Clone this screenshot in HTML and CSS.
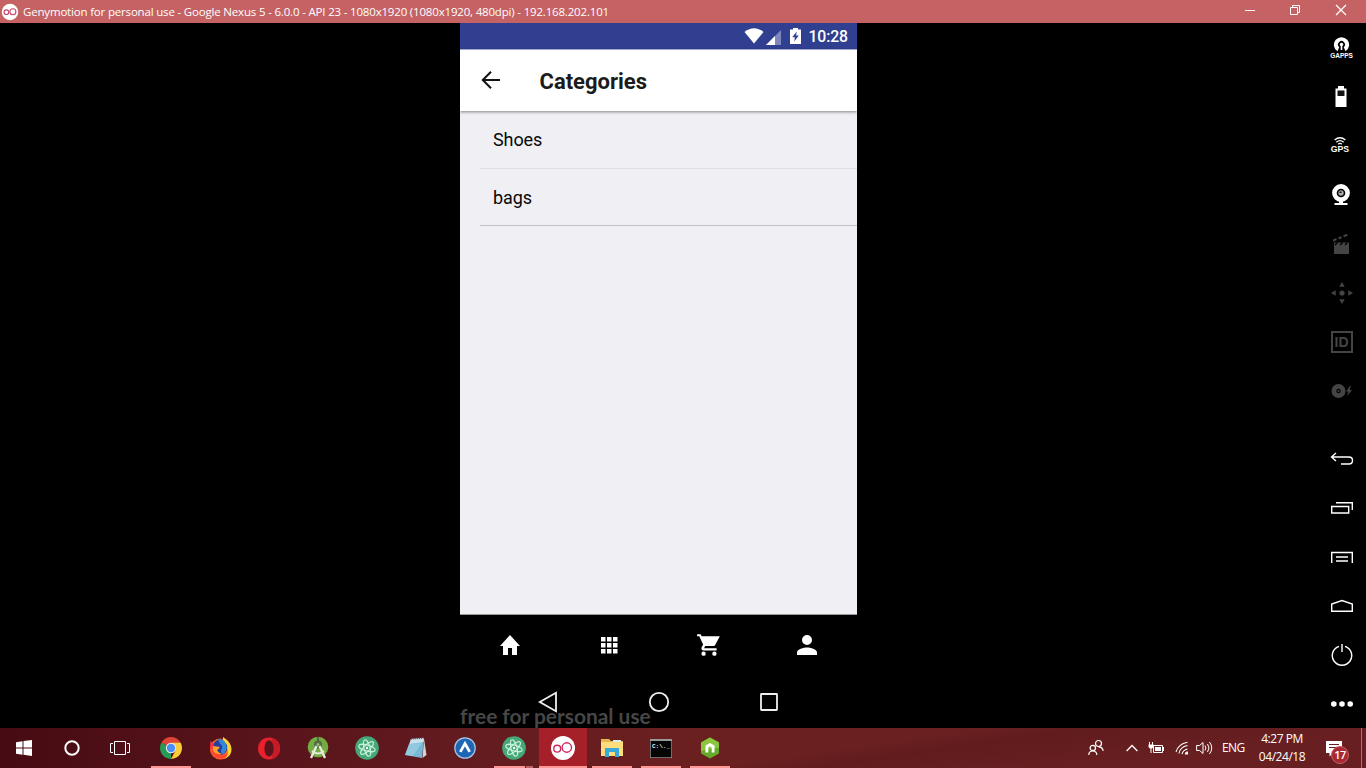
FILE: index.html
```html
<!DOCTYPE html>
<html lang="en">
<head>
<meta charset="utf-8">
<title>Genymotion for personal use</title>
<link rel="stylesheet" href="styles.css">
</head>
<body>
<div class="desktop">
  <header class="titlebar">
    <svg class="title-logo" width="18" height="18" viewBox="0 0 18 18"><circle cx="9" cy="9" r="8.2" fill="#fff"/><g fill="none" stroke="#c4486c" stroke-width="1.1"><circle cx="5.4" cy="9.2" r="2.3"/><circle cx="11.9" cy="8.8" r="3"/></g></svg>
    <span class="title-text">Genymotion for personal use - Google Nexus 5 - 6.0.0 - API 23 - 1080x1920 (1080x1920, 480dpi) - 192.168.202.101</span>
    <div class="window-buttons">
      <svg width="46" height="23" viewBox="0 0 46 23"><path d="M18 10.5h10" stroke="#fff"/></svg>
      <svg width="45" height="23" viewBox="0 0 45 23" fill="none" stroke="#fff"><path d="M17.5 7.5h7v7h-7zM19.500 7.500v-2h7v7h-2"/></svg>
      <svg width="48" height="23" viewBox="0 0 48 23"><path d="M18 5l10 10M28 5L18 15" stroke="#fff" stroke-width="1.3"/></svg>
    </div>
  </header>

  <main class="emulator">
    <section class="phone">
      <div class="statusbar">
        <svg class="wifi" width="20" height="16" viewBox="0 0 20 16"><path d="M.5 4Q10-3.500 19.500 4L10 15.500z" fill="#fff"/></svg>
        <svg class="signal" width="15" height="15" viewBox="0 0 15 15"><path d="M15 0v15H0z" fill="#7d87bd"/><path d="M9 6v9H0z" fill="#fff"/></svg>
        <svg class="battery" width="11" height="16" viewBox="0 0 11 16"><path d="M3 0h5v1.500h3V16H0V1.500h3z" fill="#fff"/><path d="M6.700 3.500L2.200 9.200h2.700l-.7 4.300 4.600-5.900H6.100z" fill="#303f8f"/></svg>
        <span class="phone-time">10:28</span>
      </div>
      <div class="appbar">
        <svg class="back" width="20" height="20" viewBox="0 0 20 20"><path d="M19 10H2M10 1.800L1.800 10l8.200 8.200" fill="none" stroke="#111" stroke-width="2"/></svg>
        <h1 class="app-title">Categories</h1>
      </div>
      <div class="list">
        <div class="row">Shoes</div>
        <div class="row row-last">bags</div>
      </div>
      <nav class="tabs">
        <svg width="24" height="24" viewBox="0 0 24 24"><path d="M10 22v-7h4v7h5v-9h3L12 2 2 13h3v9z"/></svg>
        <svg width="24" height="24" viewBox="0 0 24 24"><path d="M4 4h4.500v4.500H4zm6 0h4.500v4.500H10zm6 0h4.500v4.500H16zM4 10h4.500v4.500H4zm6 0h4.500v4.500H10zm6 0h4.500v4.500H16zM4 16h4.500v4.500H4zm6 0h4.500v4.500H10zm6 0h4.500v4.500H16z"/></svg>
        <svg class="cart" width="26" height="26" viewBox="0 0 24 24"><path d="M7 18a2 2 0 1 0 0 4 2 2 0 0 0 0-4zM1 2v2h2l3.600 7.600-1.400 2.400C4.500 15.400 5.500 17 7 17h12v-2H7.400l1.100-2h7.500c.7 0 1.400-.4 1.700-1L22 4H5.200l-.9-2zM17 18a2 2 0 1 0 0 4 2 2 0 0 0 0-4z"/></svg>
        <svg width="30" height="30" viewBox="0 0 24 24"><path d="M12 12a4 4 0 1 0 0-8 4 4 0 0 0 0 8zm0 2c-2.700 0-8 1.300-8 4v2h16v-2c0-2.700-5.300-4-8-4z"/></svg>
      </nav>
      <div class="android-nav">
        <svg width="22" height="22" viewBox="0 0 22 22"><path d="M19 1.800v18.400L2.800 11z"/></svg>
        <svg width="22" height="22" viewBox="0 0 22 22"><circle cx="11" cy="11" r="9.200"/></svg>
        <svg width="22" height="22" viewBox="0 0 22 22"><rect x="3" y="3" width="16" height="16" rx=".5"/></svg>
      </div>
      <div class="watermark">free for personal use</div>
    </section>

    <aside class="tools">
      <div class="tool tool-gapps">
        <svg width="17" height="15" viewBox="0 0 17 15"><path d="M4.500 14.200A7.600 7.600 0 1 1 12.500 14.200L10.800 10.200A3.500 3.500 0 1 0 6.200 10.200z" fill="#fff"/><circle cx="8.500" cy="7.500" r="1.700" fill="#fff"/><path d="M7.700 8h1.600v5H7.700z" fill="#fff"/></svg>
        <span class="gapps-label">GAPPS</span>
      </div>
      <div class="tool solid-tool"><svg width="12" height="21" viewBox="0 0 12 21"><path d="M3 0h6v2.500h2.500V21H.5V2.500H3z" fill="#fff"/><path d="M2.500 4.500h7V10h-7z" fill="#111"/></svg></div>
      <div class="tool tool-gps">
        <svg width="12" height="8" viewBox="0 0 12 8" fill="none" stroke="#fff" stroke-width="1.300"><path d="M.6 3Q6-1.500 11.400 3M2.300 5.200Q6 2 9.700 5.200M4.200 7.200Q6 5.600 7.800 7.200"/></svg>
        <span class="gps-label">GPS</span>
      </div>
      <div class="tool solid-tool"><svg width="20" height="22" viewBox="0 0 20 22"><circle cx="10" cy="9" r="6.600" fill="none" stroke="#fff" stroke-width="4.600"/><circle cx="10" cy="9" r="2.700" fill="#aaa"/><path d="M8.500 7.500h2V9h-2z" fill="#111"/><path d="M8 16h4v3h4.500v2h-13v-2H8z" fill="#fff"/></svg></div>
      <div class="tool solid-tool"><svg width="18" height="22" viewBox="0 0 18 22" fill="#444"><path d="M2 9.500h15V21H2z"/><path d="M1 6.500l3-1.200 1 1.800-4 1.700zM6 4.500l3-1.200 1 1.800-3 1.300zM11 2.500l4-1.700.5 2-3.500 1.500z"/><path d="M3 12l2.500-2.500M8 12l2.500-2.500M13 12l2.500-2.500" stroke="#000" stroke-width="1.300"/></svg></div>
      <div class="tool"><svg width="22" height="22" viewBox="0 0 22 22" fill="#444"><circle cx="11" cy="11" r="2.600"/><path d="M11 0l2.700 4.700H8.300zM11 22l2.700-4.700H8.300zM0 11l4.700-2.700v5.400zM22 11l-4.700-2.700v5.400z"/></svg></div>
      <div class="tool"><span class="id-box">ID</span></div>
      <div class="tool"><svg width="22" height="16" viewBox="0 0 22 16"><circle cx="7.500" cy="8" r="4.600" fill="none" stroke="#444" stroke-width="4.800"/><circle cx="7.500" cy="8" r="1" fill="#444"/><path d="M19 3l-4 5.500h2.500L16 13l5-6h-2.500L20 3z" fill="#444"/></svg></div>
      <div class="tool-gap"></div>
      <div class="tool line-tool"><svg width="24" height="14" viewBox="0 0 24 14"><path d="M6 1L1.500 5 6 9M1.500 5H19q3.500 0 3.500 3.500T19 12h-8"/></svg></div>
      <div class="tool line-tool"><svg width="22" height="14" viewBox="0 0 22 14"><path d="M.7 5.500h17v6.500H.7zM5 1.700h16.300V9"/></svg></div>
      <div class="tool line-tool"><svg width="22" height="14" viewBox="0 0 22 14"><path d="M.7 13V2.500h20.600V13M5 7h12M5 11h12"/></svg></div>
      <div class="tool line-tool"><svg width="22" height="14" viewBox="0 0 22 14"><path d="M.7 12.300V5L11 1.500 21.300 5v7.300z"/></svg></div>
      <div class="tool line-tool"><svg width="22" height="24" viewBox="0 0 22 24"><path d="M8 3.300a9.700 9.700 0 1 0 6 0M11 1v8"/></svg></div>
      <div class="tool"><svg width="22" height="6" viewBox="0 0 22 6" fill="#fff"><circle cx="2.800" cy="3" r="2.800"/><circle cx="11" cy="3" r="2.800"/><circle cx="19.200" cy="3" r="2.800"/></svg></div>
    </aside>
  </main>

  <footer class="taskbar">
    <div class="system-buttons">
      <div class="sys"><svg width="16" height="16" viewBox="0 0 16 16" fill="#fff"><path d="M0 2.300L6.500 1.300v6.200H0zM7.500 1.100L16 0v7.500H7.500zM0 8.500h6.500v6.200L0 13.700zM7.500 8.500H16V16l-8.500-1.200z"/></svg></div>
      <div class="sys"><svg width="16" height="16" viewBox="0 0 16 16"><circle cx="8" cy="8" r="6.700" fill="none" stroke="#fff" stroke-width="2"/></svg></div>
      <div class="sys"><svg width="20" height="16" viewBox="0 0 20 16" fill="none" stroke="#fff"><path d="M4.500 1.500h11v13h-11zM3 3.500H.5v9H3M17 3.500h2.500v9H17"/></svg></div>
    </div>
    <div class="apps">
      <div class="app running"><svg width="22" height="22" viewBox="0 0 22 22"><path d="M11 11L1.500 5.500A11 11 0 0 1 20.500 5.500z" fill="#df4436"/><path d="M11 11L1.500 5.500A11 11 0 0 0 11 22z" fill="#279c57"/><path d="M11 5.800h9.700A11 11 0 0 1 11 22l4.500-8.500z" fill="#fbcc3a"/><circle cx="11" cy="11" r="5.200" fill="#eee"/><circle cx="11" cy="11" r="4.200" fill="#4c8ef7"/></svg></div>
      <div class="app"><svg width="23" height="23" viewBox="0 0 23 23"><circle cx="11.500" cy="12" r="10.500" fill="#ff6a20"/><path d="M1 12L1.500 4l3 2.500L8 4l-1 4-4 7z" fill="#ff3048"/><path d="M14 0q8 5 8.500 12T15 22.200q5-4 3.500-10T14 4z" fill="#ffd334"/><path d="M5 6q3-4 8-4l5 6q1 5-2 8t-7 2-5-7z" fill="#263f9e"/><path d="M9 2.500q5-1 8 4 2 6-2 10-3 1-3-3 3-4-1-7z" fill="#3389d7"/><path d="M1 12q1 9 10.500 10.300Q18 21 19 16q-4 3-8 1T4 9z" fill="#ff4a30"/><path d="M4 9l7 1-3 3.500q2 3 5 3-6 2-9-3z" fill="#ffa22c"/></svg></div>
      <div class="app"><svg width="24" height="23" viewBox="0 0 24 23"><ellipse cx="12" cy="11.500" rx="11" ry="11" fill="#e9212d"/><path d="M15 1q8 2 8 10.500T15 22z" fill="#c91a27"/><ellipse cx="12" cy="11.500" rx="4.600" ry="8.300" fill="#59151b"/></svg></div>
      <div class="app"><svg width="22" height="24" viewBox="0 0 22 24"><circle cx="11" cy="11" r="10.300" fill="#75ac42"/><circle cx="11" cy="8.500" r="4" fill="#536a43"/><path d="M10 1h2v4h-2z" fill="#526347"/><path d="M9.500 10L4 22M12.500 10L18 22" stroke="#e5ebdf" stroke-width="2.300"/><path d="M5 15q6 5 12 0" fill="none" stroke="#e5ebdf" stroke-width="1.800"/><circle cx="11" cy="8.500" r="1.500" fill="#9cb678"/></svg></div>
      <div class="app"><svg width="24" height="24" viewBox="0 0 24 24"><circle cx="12" cy="12" r="11.800" fill="#45a879"/><g fill="none" stroke="#c8f0da" stroke-width="1.100"><ellipse cx="12" cy="12" rx="3" ry="8.500" transform="rotate(-15 12 12)"/><ellipse cx="12" cy="12" rx="3" ry="8.500" transform="rotate(45 12 12)"/><ellipse cx="12" cy="12" rx="3" ry="8.500" transform="rotate(105 12 12)"/></g><circle cx="12" cy="12" r="1.200" fill="#fff"/></svg></div>
      <div class="app"><svg width="24" height="23" viewBox="0 0 24 23"><path d="M20 2l2.500 16-4 3z" fill="#d5d4cd"/><path d="M7 2l13-1-2 20L1 18z" fill="#78b8d4"/><path d="M7 2l13-1-.3 4L5.500 7z" fill="#cce2e9"/><path d="M5 7l13-1-9 13-8-1z" fill="#a3d3e4" opacity=".6"/><path d="M7 2l13-1" stroke="#666" stroke-width="1.500" stroke-dasharray="1 1"/></svg></div>
      <div class="app"><svg width="22" height="22" viewBox="0 0 22 22"><circle cx="11" cy="11" r="10.200" fill="#1e66b4" stroke="#a9c7e6" stroke-width="1.200"/><path d="M6.300 14.800L11 6.500l4.700 8.300" fill="none" stroke="#fff" stroke-width="2.700"/></svg></div>
      <div class="app running grouped"><svg width="24" height="24" viewBox="0 0 24 24"><circle cx="12" cy="12" r="11.800" fill="#45a879"/><g fill="none" stroke="#c8f0da" stroke-width="1.100"><ellipse cx="12" cy="12" rx="3" ry="8.500" transform="rotate(-15 12 12)"/><ellipse cx="12" cy="12" rx="3" ry="8.500" transform="rotate(45 12 12)"/><ellipse cx="12" cy="12" rx="3" ry="8.500" transform="rotate(105 12 12)"/></g><circle cx="12" cy="12" r="1.200" fill="#fff"/></svg></div>
      <div class="app active"><svg width="24" height="24" viewBox="0 0 24 24"><circle cx="12" cy="12" r="12" fill="#fff"/><g fill="none" stroke="#cf285e" stroke-width="1.400"><circle cx="6.200" cy="12.700" r="3.400"/><circle cx="15.800" cy="11.500" r="4.700"/></g></svg></div>
      <div class="app running"><svg width="22" height="20" viewBox="0 0 22 20"><path d="M0 1h8l2 2h12v15H0z" fill="#e9b84e"/><path d="M0 4h22v14H0z" fill="#ffdd7c"/><path d="M12 2h8v2h-8z" fill="#d7eeee"/><path d="M4 10h14v9h-4v-5H8v5H4z" fill="#39a9d7"/></svg></div>
      <div class="app running"><svg class="console" width="22" height="19" viewBox="0 0 22 19"><path fill="#999" d="M0 0h22v19H0z"/><path fill="#050505" d="M.7 2h20.600v16.300H.7z"/><text x="2" y="8.500" fill="#eee" font-size="6" font-weight="bold">C:\._</text></svg></div>
      <div class="app running"><svg width="20" height="22" viewBox="0 0 20 22"><path d="M10 .5l9 5v11l-9 5-9-5v-11z" fill="#66aa2b"/><path d="M10 .5l9 5v5L1 14V5.500z" fill="#8bc63e"/><path d="M5.500 15.500V8.500L10 6l4.500 2.500v7h-2.800v-5L10 9.500l-1.700 1v5z" fill="#fff"/></svg></div>
    </div>
    <div class="tray">
      <svg class="people" width="16" height="18" viewBox="0 0 16 18" fill="none" stroke="#fff" stroke-width="1.200"><circle cx="10.500" cy="4.500" r="3"/><circle cx="4.800" cy="9" r="2.700"/><path d="M.8 16q0-4 4-4t4 4M10.500 7.800q4 0 4.700 4"/></svg>
      <svg class="chevron" width="12" height="8" viewBox="0 0 12 8"><path d="M.6 7L6 1.500 11.400 7" fill="none" stroke="#fff" stroke-width="1.300"/></svg>
      <svg class="power" width="17" height="12" viewBox="0 0 17 12"><path d="M5.500 3.500h9v7h-9z" fill="none" stroke="#fff"/><path d="M7 5h6v4H7zM15 5h1v4h-1zM.5 2.500h5V5L4 6.500H2L.5 5zM1 0h1v3H1zM4 0h1v3H4zM2.500 6h1v5h-1z" fill="#fff"/></svg>
      <svg class="net" width="14" height="14" viewBox="0 0 14 14" fill="none" stroke="#fff" stroke-width="1.100"><path d="M1 11Q3 3 12.500 1.200M4 12.500Q5 6 12.500 4.500M7 13Q8 9 12.500 8"/><path d="M10.500 13q0-2 2-2v2z" fill="#fff"/></svg>
      <svg class="sound" width="17" height="14" viewBox="0 0 17 14" fill="none" stroke="#fff"><path d="M.6 4.500h3L7 1.500v11l-3.400-3h-3zM9 4.500q1.800 2.500 0 5M11.500 3q3 4 0 8M13.500 1q4.500 6 0 12"/></svg>
      <span class="lang">ENG</span>
      <div class="clock"><span class="hour">4:27 PM</span><span class="date">04/24/18</span></div>
      <div class="notify">
        <svg width="18" height="17" viewBox="0 0 18 17"><path d="M1 1h16v12H8l-3.500 3.500V13H1z" fill="#fff"/><path d="M4 4.500h10M4 7.500h10" stroke="#681f21"/></svg>
        <span class="badge">17</span>
      </div>
      <div class="show-desktop"></div>
    </div>
  </footer>
</div>
</body>
</html>
```
FILE: styles.css
```css
* { box-sizing: border-box; }
body { margin: 0; background: #000; font-family: "Open Sans", sans-serif; }
svg { display: block; flex: none; }
.desktop { width: 1366px; height: 768px; display: flex; flex-direction: column; overflow: hidden; }

.titlebar { height: 23px; flex: none; display: flex; align-items: center; background: #c46264; color: #fff; padding-left: 1px; }
.title-text { margin-left: 4px; font-size: 11.5px; line-height: 22px; white-space: nowrap; letter-spacing: -0.18px; }
.window-buttons { display: flex; margin-left: auto; }

.emulator { height: 705px; flex: none; display: flex; justify-content: space-between; padding-left: 460px; background: #000; }
.phone { position: relative; width: 397px; display: flex; flex-direction: column; font-family: Roboto, sans-serif; }
.statusbar { height: 27px; display: flex; align-items: center; justify-content: flex-end; padding-right: 9px; background: #303f8f; color: #fff; border-bottom: 1px solid #b0b5d8; }
.signal { margin: 2px 0 0 2px; }
.battery { margin-left: 9px; }
.phone-time { margin: 1px 0 0 7px; font-size: 15.8px; font-weight: 500; line-height: 26px; letter-spacing: -0.1px; }
.appbar { position: relative; height: 61px; display: flex; align-items: center; padding-left: 21px; background: #fff; box-shadow: 0 1px 3px rgba(0, 0, 0, .45); }
.back { margin-bottom: 1px; }
.app-title { margin: 3px 0 0 38.5px; font-size: 22px; font-weight: 700; color: #1b1b1b; line-height: 28px; }
.list { height: 504px; padding-left: 20px; background: #efeff4; border-bottom: 1px solid #999; }
.row { height: 58px; padding-left: 13px; border-bottom: 1px solid #dedee3; font-size: 18px; line-height: 58px; letter-spacing: -0.1px; color: #080808; }
.row-last { height: 57px; border-color: #c0c0c6; }
.tabs { height: 61px; display: grid; grid-template-columns: repeat(4, 1fr); place-items: center; padding-bottom: 1px; fill: #fff; }
.cart { margin-left: 1px; }
.android-nav { height: 52px; display: flex; align-items: center; justify-content: space-between; padding: 0 77px 1px; fill: none; stroke: #eee; stroke-width: 1.8; }
.watermark { position: absolute; left: 0; top: 680px; font: bold 20.9px/26px Lato, sans-serif; color: #4b4b4b; opacity: .95; white-space: nowrap; }

.tools { width: 49px; display: flex; flex-direction: column; }
.tool { height: 49px; flex: none; display: flex; flex-direction: column; align-items: center; justify-content: center; color: #fff; }
.tool-gap { height: 19.5px; flex: none; }
.solid-tool { padding-right: 2px; }
.line-tool { fill: none; stroke: #fff; stroke-width: 1.4; }
.gapps-label { font: bold 6.5px/7px "Liberation Sans", sans-serif; letter-spacing: -0.1px; }
.tool-gps { padding-right: 3px; }
.gps-label { font: bold 8.7px/9px "Liberation Sans", sans-serif; }
.id-box { width: 22px; height: 22px; border: 2px solid #444; color: #444; font: bold 14px/19px "Liberation Sans", sans-serif; text-align: center; }

.taskbar { height: 40px; flex: none; display: flex; background: linear-gradient(172deg, transparent 60%, rgba(35, 0, 8, .12) 66%, transparent 85%), linear-gradient(90deg, #470b13, #541219 15%, #621b1f 33%, #6b2020 50%, #681f21); color: #fff; }
.system-buttons { display: flex; }
.sys { width: 48px; display: grid; place-items: center; }
.apps { display: flex; gap: 1px; margin-left: 3px; }
.app { width: 48px; height: 40px; display: grid; place-items: center; }
.running { background: linear-gradient(#ff9797, #ff9797) 4px 38px / 40px 2px no-repeat; }
.grouped { background: linear-gradient(#ff9797, #ff9797) 4px 38px / 31px 2px no-repeat, linear-gradient(#ba6666, #ba6666) 36px 38px / 7px 2px no-repeat; }
.active { background: linear-gradient(#ff9797, #ff9797) 0 38px / 48px 2px no-repeat, #a52028; }
.console { font-family: "Liberation Mono", monospace; }
.tray { margin-left: auto; display: flex; align-items: center; height: 40px; }
.chevron { margin-left: 22px; }
.power { margin-left: 10px; }
.net { margin-left: 10px; }
.sound { margin-left: 7px; }
.lang { width: 26px; margin-left: 9px; font-size: 12px; line-height: 16px; letter-spacing: -0.6px; }
.clock { width: 50px; margin-left: 9px; display: flex; flex-direction: column; align-items: center; font-size: 12px; line-height: 18px; letter-spacing: -0.45px; white-space: nowrap; }
.notify { position: relative; margin-left: 18px; width: 26px; }
.badge { position: absolute; left: 6px; top: 6px; width: 18px; height: 18px; border-radius: 50%; background: #a92932; border: 1px solid #c56266; font-size: 11px; font-weight: 600; line-height: 16px; text-align: center; letter-spacing: -0.5px; }
.show-desktop { width: 5px; height: 40px; margin-left: 10px; border-left: 1px solid #a57575; }
```
